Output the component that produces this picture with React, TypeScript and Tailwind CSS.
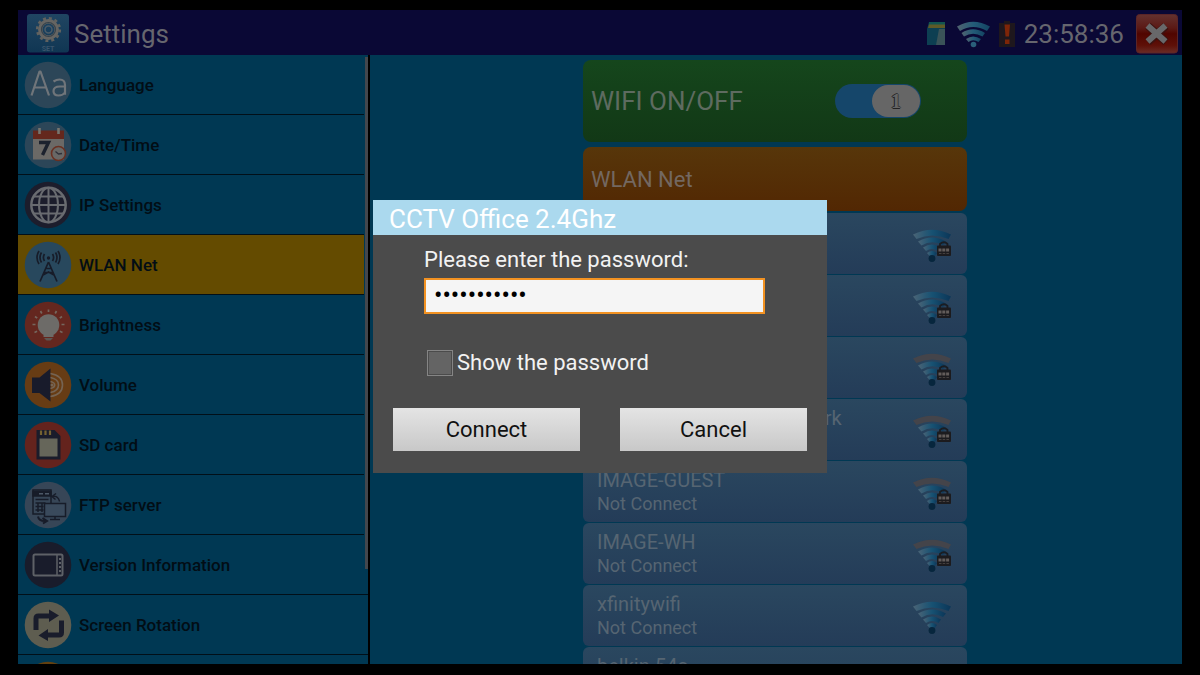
import { useState } from "react"
import type { ReactNode } from "react"
import clsx from "clsx"

type MenuItem = { label: string; icon: ReactNode }
type Network = { name: string; bars: 3 | 4; locked: boolean }

function Disc({ fill, children }: { fill: string; children?: ReactNode }) {
  return (
    <svg viewBox="0 0 48 48" className="h-12 w-12 shrink-0" aria-hidden="true">
      <circle cx="24" cy="24" r="23.3" fill={fill} />
      {children}
    </svg>
  )
}

const LanguageIcon = (
  <Disc fill="#2c4658">
    <g fill="none" stroke="#70757a" strokeWidth="2.2" strokeLinejoin="round">
      <path d="M7.5 34.5 15.5 10.5h1L25 34.5M10.2 26.5h12.2" />
      <path d="M29.5 20.5q3-2 6-2 5.5 0 5.5 5.5v9.8M41 25.5h-5q-6.500 0-6.500 4.500 0 4.500 5 4.500 4.500 0 6.500-3" />
    </g>
  </Disc>
)

const DateIcon = (
  <Disc fill="#2c4658">
    <path d="M9 17h31v21.5H9z" fill="#6b6966" />
    <path d="M9 9.5h31V18H9z" fill="#64271d" />
    <path d="M15.5 7v6M34.5 7v6" stroke="#77756f" strokeWidth="2.6" />
    <path d="M15 21.5h9.5L18.5 34" fill="none" stroke="#1c222e" strokeWidth="3.4" />
    <circle cx="34.5" cy="32.5" r="7" fill="#696866" stroke="#6a3021" strokeWidth="1.6" />
    <path d="M31.5 30.5 34.5 33l3.5-.5" fill="none" stroke="#303039" strokeWidth="1.3" />
  </Disc>
)

const GlobeIcon = (
  <Disc fill="#1c1d2c">
    <g fill="none" stroke="#696b70" strokeWidth="2">
      <circle cx="24.5" cy="24" r="17.2" strokeWidth="2.5" />
      <ellipse cx="24.5" cy="24" rx="9.5" ry="17.2" />
      <path d="M24.5 7v34M7.5 24h34M10 15.5h29M10 32.5h29" />
    </g>
  </Disc>
)

const AntennaIcon = (
  <Disc fill="#28485d">
    <g fill="none" stroke="#171c29" strokeWidth="1.7">
      <path d="M24.5 21 16 40.5M24.5 21 33 40.5M20.5 31.5h8M21.5 27.5h6M19 34l5.5-3 5.500 3" />
      <path d="M20.5 13q-2.200 3.500 0 7M28.500 13q2.200 3.500 0 7M17.500 11.500q-3 5 0 10M31.500 11.500q3 5 0 10M15 10q-4 6.500 0 13M34 10q4 6.500 0 13" />
    </g>
    <circle cx="24.5" cy="17" r="1.7" fill="#171c29" />
  </Disc>
)

const BulbIcon = (
  <Disc fill="#64271f">
    <circle cx="24.5" cy="24" r="10.8" fill="#6d6b68" />
    <path d="M19.5 32h10v4h-10z" fill="#6d6b68" />
    <path d="M20 37h9l-2.5 2.5h-4z" fill="#5c5753" />
    <path
      d="M24.5 8.5v2.5M16.5 10l1.3 2.5M32.5 10l-1.3 2.5M11 15.500l2.200 1.700M38 15.500l-2.200 1.700M8.500 23.500h3M37.500 23.500h3M10.500 31.500l2.600-1.200M38.500 31.500l-2.600-1.200"
      stroke="#75675e"
      strokeWidth="1.7"
    />
  </Disc>
)

const SpeakerIcon = (
  <Disc fill="#673c14">
    <path d="M8 16.5h7.5L26.5 7.5v33L15.5 32H8z" fill="#181b2b" />
    <g fill="none" stroke="#756453" strokeWidth="1.6">
      <path d="M26.5 12.5q12 2 12 11.5t-12 11.5" />
      <path d="M26.5 16.5q8 1.5 8 7.5t-8 7.5" />
      <path d="M26.5 20.5q4.2 1 4.2 3.5t-4.2 3.5" />
    </g>
    <circle cx="28" cy="24" r="1.5" fill="#756453" />
  </Disc>
)

const SdIcon = (
  <Disc fill="#64231d">
    <path d="M12.5 9h18l6 6v23.5h-24z" fill="#1a1c2b" />
    <path d="M15.5 17.5h18v18h-18z" fill="#66665a" />
    <path d="M17 9.5V14M21.5 9.5V14M26 9.5V14" stroke="#756231" strokeWidth="2.2" />
  </Disc>
)

const FtpIcon = (
  <Disc fill="#374657">
    <g fill="none" stroke="#171c29" strokeWidth="1.5">
      <path d="M9 9h18v24H9z" />
      <path d="M9 10.5h18V15H9z" fill="#171c29" />
      <path d="M11.5 18.5h13M11.5 22h10M11.5 25.5h8M11.5 29h8M14 22v9M18 22v9" />
      <path d="M20.5 22.5h21v13h-21z" fill="#3a4a5c" />
      <path d="M31 35.5v3M26 38.5h10" />
      <path d="M28.5 15.5q6-1 7 5M32 12.5l-4 3 3.5 3" />
      <path d="M14 35.5q1 5 8 4.5M18.5 37l4.5 3-4 2.5" strokeWidth="2" />
    </g>
    <path d="M15 12.7h4M21 12.7h4" stroke="#4d5968" strokeWidth="1.5" />
  </Disc>
)

const DeviceIcon = (
  <Disc fill="#191c2b">
    <rect x="9.5" y="13.5" width="29" height="21" rx="1.5" fill="none" stroke="#5e6167" strokeWidth="2" />
    <path d="M33 14v20" stroke="#5e6167" strokeWidth="1.5" />
    <path d="M36 17v14" stroke="#5e6167" strokeWidth="2" strokeDasharray="2 2" />
  </Disc>
)

const RotateIcon = (
  <Disc fill="#5e5d50">
    <path d="M12 29V17.500q0-2.500 2.500-2.500H26M37.500 19.500v12q0 2.500-2.500 2.500H22" fill="none" stroke="#191c2b" strokeWidth="5" />
    <path d="M25 8.5 35 14.5 25 21zM24 28 14.5 34.5 24 40z" fill="#191c2b" />
  </Disc>
)

const MENU: MenuItem[] = [
  { label: "Language", icon: LanguageIcon },
  { label: "Date/Time", icon: DateIcon },
  { label: "IP Settings", icon: GlobeIcon },
  { label: "WLAN Net", icon: AntennaIcon },
  { label: "Brightness", icon: BulbIcon },
  { label: "Volume", icon: SpeakerIcon },
  { label: "SD card", icon: SdIcon },
  { label: "FTP server", icon: FtpIcon },
  { label: "Version Information", icon: DeviceIcon },
  { label: "Screen Rotation", icon: RotateIcon },
  { label: "Screen Lock", icon: <Disc fill="#64400f" /> },
]

const NETWORKS: Network[] = [
  { name: "CCTV Office 2.4Ghz", bars: 4, locked: true },
  { name: "CCTV Office 5Ghz", bars: 4, locked: true },
  { name: "IMAGE", bars: 3, locked: true },
  { name: "CCTV camera Pros network", bars: 3, locked: true },
  { name: "IMAGE-GUEST", bars: 3, locked: true },
  { name: "IMAGE-WH", bars: 3, locked: true },
  { name: "xfinitywifi", bars: 4, locked: false },
  { name: "belkin.54a", bars: 3, locked: true },
]

function SignalIcon({ bars, locked }: { bars: 3 | 4; locked: boolean }) {
  return (
    <svg viewBox="0 0 40 40" className="h-10 w-10 shrink-0" aria-hidden="true">
      <defs>
        <linearGradient id="signal" x1="0" x2="1">
          <stop offset="0" stopColor="#4a6476" />
          <stop offset="0.5" stopColor="#175273" />
          <stop offset="1" stopColor="#0b3658" />
        </linearGradient>
      </defs>
      <path d="M1 10.5Q20 1 39 10.5l-2.500 4.500Q20 8 4.500 15z" fill={bars === 4 ? "url(#signal)" : "#44444a"} />
      <path d="M6 17.5Q20 9.500 34 17.500l-3 3.500Q20 15.500 9.500 21.500z" fill="url(#signal)" />
      <path d="M11 23.5Q20 17.500 29 23.500l-2.500 3.500Q20 23 14 27z" fill="url(#signal)" />
      <path d="M15 29q5-4 10 0l-2.5 3.500q-2.500-2-4.500 0z" fill="url(#signal)" />
      <circle cx="20" cy="34.5" r="3.4" fill="#07263d" />
      {locked && (
        <g>
          <path d="M28 22v-2q4-3.500 7.500 0v2" fill="none" stroke="#1b1d22" strokeWidth="1.8" />
          <rect x="25" y="21.5" width="14" height="10.5" rx="1" fill="#1c1b1e" />
          <path d="M26.500 26h11" stroke="#625c5a" strokeWidth="3" strokeDasharray="3 0.800" />
          <path d="M27 29.500h10" stroke="#45403f" strokeWidth="1.200" strokeDasharray="2.500 1.200" />
        </g>
      )}
    </svg>
  )
}

function AppIcon() {
  return (
    <svg viewBox="0 0 42 40" className="h-10 w-[42px]" aria-hidden="true">
      <defs>
        <linearGradient id="tile" x1="0" y1="0" x2="0" y2="1">
          <stop offset="0" stopColor="#204562" />
          <stop offset="1" stopColor="#103653" />
        </linearGradient>
      </defs>
      <rect width="42" height="38.5" rx="3" fill="url(#tile)" />
      <circle cx="21.5" cy="15.5" r="11.3" fill="none" stroke="#62625f" strokeWidth="2.6" strokeDasharray="3 2.916" />
      <circle cx="21.5" cy="15.5" r="8.2" fill="none" stroke="#666562" strokeWidth="4.5" />
      <circle cx="21.5" cy="15.5" r="7" fill="none" stroke="#35424c" strokeWidth="1.2" />
      <circle cx="21.5" cy="15.5" r="3.5" fill="none" stroke="#4d5c68" strokeWidth="1.5" />
      <text x="21" y="36.5" textAnchor="middle" fontSize="7" fontWeight="700" fill="#3a546c" fontFamily="Roboto, sans-serif">
        SET
      </text>
    </svg>
  )
}

function StatusIcons() {
  return (
    <div className="flex items-center">
      <svg viewBox="0 0 20 26" className="h-[26px] w-5" aria-hidden="true">
        <path d="M3 1h16v23H1V8z" fill="#0d3f52" />
        <path d="M3 1h16v3H3z" fill="#125450" />
        <path d="M3 3.500h16V7H2z" fill="#5f5a27" />
        <path d="M13 8h6v16h-9z" fill="#3a5358" />
      </svg>
      <svg viewBox="0 0 36 28" className="ml-2.5 h-7 w-9" aria-hidden="true">
        <defs>
          <linearGradient id="status-signal" x1="0" x2="1">
            <stop offset="0" stopColor="#50626f" />
            <stop offset="0.5" stopColor="#235c78" />
            <stop offset="1" stopColor="#134462" />
          </linearGradient>
        </defs>
        <g fill="url(#status-signal)">
          <path d="M1 6.5Q17-3 34 6.500l-3 4.500Q17 3 4 11z" />
          <path d="M5.500 13Q17 5.500 29 13l-2.500 3.500Q17 11 8 16.500z" />
          <path d="M10 19Q17 14 25 19l-2.500 3Q17 18.500 12.500 22z" />
        </g>
        <circle cx="17.500" cy="24.500" r="2.800" fill="#2a5f7a" />
      </svg>
      <svg viewBox="0 0 18 26" className="ml-1.5 h-[26px] w-[18px]" aria-hidden="true">
        <path d="M6 0h6v2h5v24H1V2h5z" fill="#1e171d" />
        <path d="M6.500 3.500h5.500l-1 12H7.500zM7 18.500h4.500V23H7z" fill="#7d2508" />
      </svg>
    </div>
  )
}

function CloseIcon() {
  return (
    <svg viewBox="0 0 42 40" className="h-10 w-[42px]" aria-hidden="true">
      <defs>
        <linearGradient id="close" x1="0" y1="0" x2="0" y2="1">
          <stop offset="0" stopColor="#64322f" />
          <stop offset="0.35" stopColor="#5b1915" />
          <stop offset="0.5" stopColor="#500500" />
          <stop offset="0.8" stopColor="#5e1008" />
          <stop offset="1" stopColor="#692d26" />
        </linearGradient>
      </defs>
      <rect x="0.5" y="0.5" width="41" height="38.5" rx="3" fill="url(#close)" stroke="#5a2528" />
      <path d="m12 12 18 16M30 12 12 28" stroke="#3c1210" strokeWidth="8" />
      <path d="m11.500 11.500 18 16M29.500 11.500l-18 16" stroke="#68686a" strokeWidth="6" />
    </svg>
  )
}

function TopBar() {
  return (
    <header className="flex h-[45px] shrink-0 items-center bg-[#0a0835] pl-[9px] pr-1 pt-0.5 text-[#66666e]">
      <AppIcon />
      <h1 className="ml-[5px] text-[26px] leading-8">Settings</h1>
      <div className="ml-auto flex items-center">
        <StatusIcons />
        <time className="ml-2 text-[26px] leading-8">23:58:36</time>
        <button type="button" aria-label="Close" className="ml-3">
          <CloseIcon />
        </button>
      </div>
    </header>
  )
}

function Sidebar({ active, onSelect }: { active: string; onSelect: (label: string) => void }) {
  return (
    <nav className="relative w-[352px] shrink-0 overflow-hidden border-r-2 border-black">
      {MENU.map(({ label, icon }) => (
        <button
          key={label}
          type="button"
          onClick={() => onSelect(label)}
          className={clsx(
            "flex h-[60px] w-full items-center gap-[7px] border-b border-[#010f18] pl-1.5 pt-px text-left text-[17px] font-medium leading-6 text-[#020d15]",
            label === active && "bg-[#644b00]"
          )}
        >
          {icon}
          {label}
        </button>
      ))}
      {/* scroll thumb */}
      <div className="absolute right-0 top-0.5 h-[512px] w-1 bg-[#003853]">
        <div className="ml-px h-full bg-[#44474d]" />
      </div>
    </nav>
  )
}

function WifiPanel() {
  const [wifi, setWifi] = useState(true)

  return (
    <main className="flex flex-1 justify-center overflow-hidden pr-0.5">
      <div className="flex w-96 flex-col pt-[5px]">
        <label className="flex h-[82px] shrink-0 items-center justify-between rounded-lg bg-linear-to-b from-[#15461c] to-[#123816] pl-2 pr-[46px] text-[26px] leading-8 text-[#5e6b60]">
          WIFI ON/OFF
          <input
            type="checkbox"
            role="switch"
            checked={wifi}
            onChange={(e) => setWifi(e.target.checked)}
            className="sr-only"
          />
          <span className={clsx("flex h-[34px] w-[86px] rounded-full bg-[#15466a] p-px", wifi && "justify-end")}>
            <span className="flex h-8 w-12 items-center justify-center rounded-full bg-[#666] font-['Liberation_Serif',serif] text-[20px] font-bold leading-6 text-[#666] [text-shadow:-1px_0_#222,0_1px_#222,1px_0_#444,0_-1px_#333]">
              {wifi ? "1" : "0"}
            </span>
          </span>
        </label>
        <div className="mt-[5px] flex h-16 shrink-0 items-center rounded-lg bg-linear-to-b from-[#57360a] to-[#522703] pl-2 pt-0.5 text-[22px] leading-8 text-[#736861]">
          WLAN Net
        </div>
        <ul className="mt-0.5 flex flex-col gap-px">
          {NETWORKS.map(({ name, bars, locked }) => (
            <li key={name}>
              <button
                type="button"
                className="flex h-[61px] w-full items-center justify-between rounded-md bg-linear-to-b from-[#2a475f] to-[#243c58] pl-3.5 pr-[15px] text-left"
              >
                <span className="flex flex-col pt-px">
                  <span className="text-[20px] leading-6 text-[#566572]">{name}</span>
                  <span className="text-[18px] leading-6 text-[#566572]">Not Connect</span>
                </span>
                <SignalIcon bars={bars} locked={locked} />
              </button>
            </li>
          ))}
        </ul>
      </div>
    </main>
  )
}

function PasswordDialog({ ssid }: { ssid: string }) {
  const [password, setPassword] = useState("cctvcamera1")
  const [visible, setVisible] = useState(false)

  return (
    <div className="fixed inset-0 flex items-center justify-center pb-0.5">
      <form
        role="dialog"
        aria-labelledby="ssid"
        onSubmit={(e) => e.preventDefault()}
        className="w-[454px] bg-[#4b4b4b] text-[#f2f2f2]"
      >
        <h2 id="ssid" className="h-[35px] bg-[#abd9ee] pl-4 text-[26px] leading-[38px] text-white">
          {ssid}
        </h2>
        <div className="flex flex-col items-start px-[51px] pt-[11px]">
          <label htmlFor="password" className="text-[22px] leading-7">
            Please enter the password:
          </label>
          <input
            id="password"
            type={visible ? "text" : "password"}
            value={password}
            onChange={(e) => setPassword(e.target.value)}
            className="mt-1 h-9 w-[341px] border-2 border-[#f29222] bg-[#f5f5f5] px-2 text-[25px] text-black outline-none"
          />
          <label className="ml-[3px] mt-[35px] flex items-center gap-1 text-[22px] leading-7">
            <input
              type="checkbox"
              checked={visible}
              onChange={(e) => setVisible(e.target.checked)}
              className="h-[26px] w-[26px] appearance-none border border-[#858585] bg-[#646464] shadow-[inset_0_0_0_1px_#4b4b4b] checked:bg-[#f29222]"
            />
            Show the password
          </label>
        </div>
        <div className="flex justify-between px-5 pb-[22px] pt-[31px] text-[22px] text-[#111]">
          <button type="submit" className="h-[43px] w-[187px] bg-linear-to-b from-[#e4e4e4] to-[#c8c8c8]">
            Connect
          </button>
          <button type="button" className="h-[43px] w-[187px] bg-linear-to-b from-[#e4e4e4] to-[#c8c8c8]">
            Cancel
          </button>
        </div>
      </form>
    </div>
  )
}

export default function App() {
  const [active, setActive] = useState("WLAN Net")

  return (
    <div className="flex h-screen flex-col overflow-hidden bg-black px-[18px] pb-[11px] pt-2.5 font-['Roboto',sans-serif]">
      <TopBar />
      <div className="flex min-h-0 flex-1 bg-[#003853]">
        <Sidebar active={active} onSelect={setActive} />
        <WifiPanel />
      </div>
      <PasswordDialog ssid="CCTV Office 2.4Ghz" />
    </div>
  )
}
